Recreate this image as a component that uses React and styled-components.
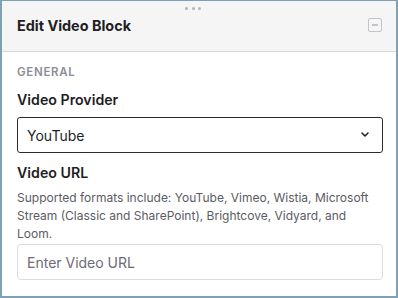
import React, { useState } from 'react';
import styled, { createGlobalStyle } from 'styled-components';

const GlobalStyle = createGlobalStyle`
  html, body {
    margin: 0;
    padding: 0;
    background: #ffffff;
  }
  body {
    font-family: Inter, "Noto Sans", "Liberation Sans", sans-serif;
    color: #1e1e24;
  }
  * {
    box-sizing: border-box;
  }
`;

const Panel = styled.div`
  width: 398px;
  height: 298px;
  border: 2px solid #7ea2b5;
  border-top-width: 1px;
  background: #ffffff;
  position: relative;
  overflow: hidden;
`;

const DragHandle = styled.div`
  position: absolute;
  top: 6px;
  left: 183px;
  display: flex;
  gap: 3.5px;

  span {
    width: 3px;
    height: 3px;
    border-radius: 50%;
    background: #b3b3bb;
  }
`;

const Header = styled.div`
  height: 51px;
  display: flex;
  align-items: center;
  justify-content: space-between;
  padding: 0 14px 2px 15px;
  background: #f5f5f6;
  border-bottom: 1px solid #d6d6db;
`;

const Title = styled.h2`
  margin: 0;
  font-size: 14.4px;
  font-weight: 700;
  color: #1e1e24;
`;

const CollapseButton = styled.button`
  width: 14px;
  height: 14px;
  padding: 0;
  border: 1.5px solid #c3c3ca;
  border-radius: 2px;
  background: transparent;
  display: flex;
  align-items: center;
  justify-content: center;
  cursor: pointer;

  &::after {
    content: '';
    width: 6px;
    height: 2px;
    background: #c3c3ca;
  }
`;

const Body = styled.div`
  padding: 13px 13px 0 15px;
  display: flex;
  flex-direction: column;
`;

const SectionLabel = styled.div`
  font-size: 11.5px;
  font-weight: 600;
  letter-spacing: 0.7px;
  text-transform: uppercase;
  color: #8d8d96;
  line-height: 14px;
  margin-bottom: 11px;
`;

const FieldLabel = styled.label`
  display: block;
  font-size: 14.2px;
  font-weight: 600;
  color: #1e1e24;
  line-height: 20px;
  margin-bottom: ${(p) => p.$gap || 6}px;
`;

const SelectWrap = styled.div`
  position: relative;
  height: 36px;
  margin-bottom: 10px;
`;

const Select = styled.select`
  appearance: none;
  width: 100%;
  height: 100%;
  padding: 0 30px 0 9px;
  border: 1px solid #2b2b30;
  border-radius: 3px;
  background: #ffffff;
  font-family: inherit;
  font-size: 14px;
  color: #1e1e24;
  outline: none;
`;

const Chevron = styled.svg`
  position: absolute;
  right: 14px;
  top: 15px;
  pointer-events: none;
`;

const Help = styled.p`
  margin: 0 0 1px;
  font-size: 12px;
  line-height: 18px;
  color: #5b5b63;
`;

const TextInput = styled.input`
  width: 100%;
  height: 36px;
  padding: 0 9px;
  border: 1px solid #dcdce0;
  border-radius: 4px;
  font-family: inherit;
  font-size: 14px;
  color: #1e1e24;
  outline: none;

  &::placeholder {
    color: #6c6c73;
  }
`;

export default function App() {
  const [provider, setProvider] = useState('youtube');
  const [url, setUrl] = useState('');

  return (
    <>
      <GlobalStyle />
      <Panel>
        <DragHandle>
          <span />
          <span />
          <span />
        </DragHandle>
        <Header>
          <Title>Edit Video Block</Title>
          <CollapseButton aria-label="Collapse" />
        </Header>
        <Body>
          <SectionLabel>General</SectionLabel>
          <FieldLabel $gap={7}>Video Provider</FieldLabel>
          <SelectWrap>
            <Select value={provider} onChange={(e) => setProvider(e.target.value)}>
              <option value="youtube">YouTube</option>
              <option value="vimeo">Vimeo</option>
              <option value="wistia">Wistia</option>
              <option value="stream">Microsoft Stream</option>
              <option value="brightcove">Brightcove</option>
              <option value="vidyard">Vidyard</option>
              <option value="loom">Loom</option>
            </Select>
            <Chevron width="8" height="5" viewBox="0 0 8 5" fill="none">
              <path d="M1 1l3 3 3-3" stroke="#1e1e24" strokeWidth="1.5" strokeLinecap="round" strokeLinejoin="round" />
            </Chevron>
          </SelectWrap>
          <FieldLabel $gap={6}>Video URL</FieldLabel>
          <Help>
            Supported formats include: YouTube, Vimeo, Wistia, Microsoft Stream (Classic and SharePoint), Brightcove, Vidyard, and Loom.
          </Help>
          <TextInput
            type="text"
            value={url}
            onChange={(e) => setUrl(e.target.value)}
            placeholder="Enter Video URL"
          />
        </Body>
      </Panel>
    </>
  );
}
